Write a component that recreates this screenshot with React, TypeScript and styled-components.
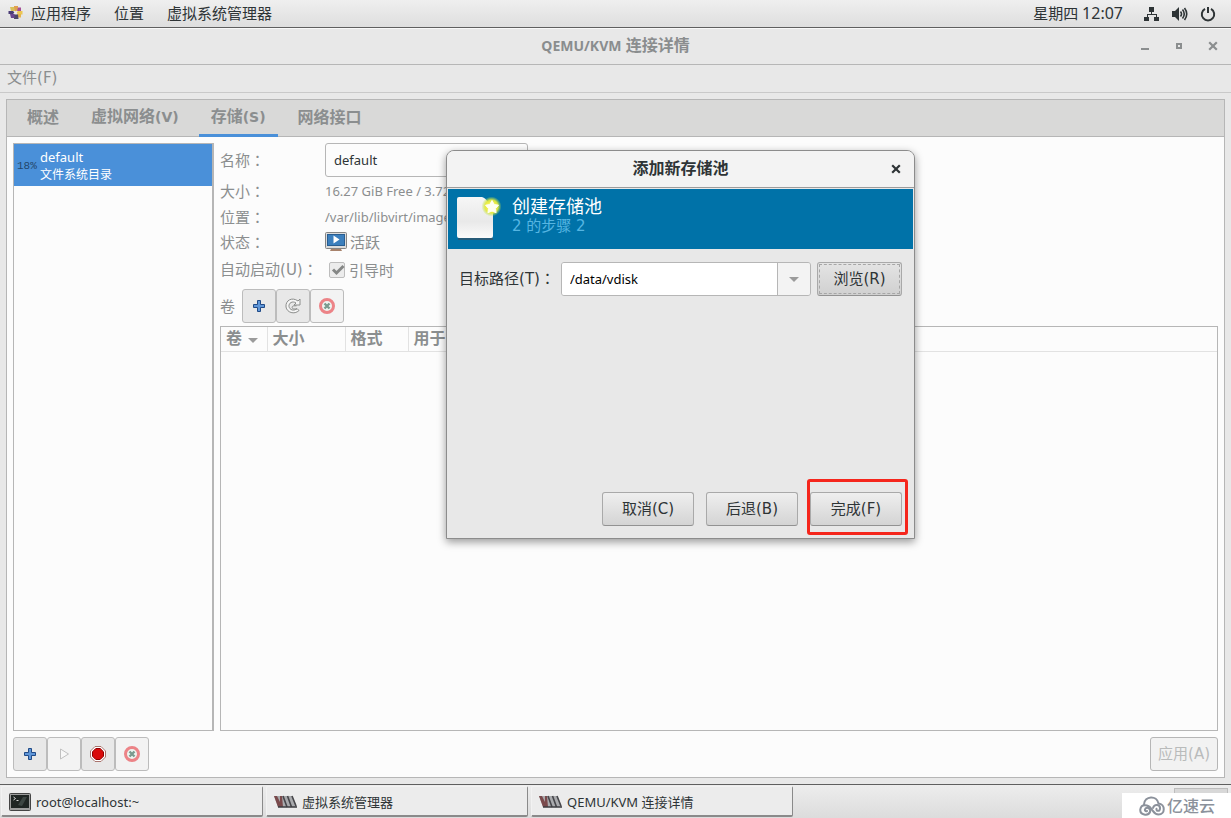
import React from "react";
import styled, { createGlobalStyle, css } from "styled-components";

const sans = `"Noto Sans", "Noto Sans CJK SC", sans-serif`;
const line = "#b6b6b6";
const muted = "#8b8e8f";

const Global = createGlobalStyle`
  *, *::before, *::after { box-sizing: border-box; }
  body { margin: 0; background: #e8e8e8; font-family: ${sans}; color: #2e3436; }
  button, input { font-family: inherit; color: inherit; margin: 0; }
  button { cursor: default; }
`;

const Desktop = styled.div`
  position: relative;
  display: flex;
  flex-direction: column;
  min-height: 100vh;
  overflow: hidden;
  font-size: 15px;
  line-height: 20px;
`;

const MnemonicText = styled.span`
  font-family: "DejaVu Sans", sans-serif;
`;

/* Top panel */

const Panel = styled.header`
  display: flex;
  align-items: center;
  justify-content: space-between;
  height: 28px;
  padding: 0 15px 0 8px;
  background: linear-gradient(#efefef, #dedede);
  border-bottom: 1px solid #5f5f5f;
`;

const PanelMenus = styled.nav`
  display: flex;
  align-items: center;
  gap: 23px;
`;

const PanelStatus = styled.div`
  display: flex;
  align-items: center;
  gap: 12px;
`;

const PanelButton = styled.button`
  display: flex;
  align-items: center;
  gap: 8px;
  padding: 0 0 2px;
  border: 0;
  background: none;
  font-size: 15px;
  line-height: 20px;
`;

const Clock = styled.time`
  margin-right: 9px;
  padding-bottom: 2px;
`;

const ClockDigits = styled.span`
  font-size: 16px;
`;

/* Main window */

const Window = styled.main`
  display: flex;
  flex: 1;
  flex-direction: column;
`;

const TitleBar = styled.div`
  display: grid;
  grid-template-columns: 1fr auto 1fr;
  align-items: center;
  height: 37px;
  padding: 0 12px 1px;
  border-top: 1px solid #f8f8f8;
  border-bottom: 1px solid ${line};
`;

const Title = styled.h1`
  grid-column: 2;
  margin: 0;
  padding-bottom: 1px;
  color: #8a8d8e;
  font-size: 16px;
  line-height: 20px;
`;

const TitleLatin = styled.span`
  font-size: 14px;
`;

const WindowControls = styled.div`
  display: flex;
  justify-content: flex-end;
  gap: 22px;
`;

const IconOnly = styled.button`
  display: flex;
  padding: 0;
  border: 0;
  background: none;
`;

const MenuBar = styled.nav`
  display: flex;
  align-items: center;
  height: 28px;
  padding: 0 7px;
  border-bottom: 1px solid #c9c9c9;
  color: ${muted};
`;

const Notebook = styled.section`
  display: flex;
  flex: 1;
  flex-direction: column;
  margin: 6px 6px 6px;
  border: 1px solid ${line};
  background: #fcfcfc;
`;

const Tabs = styled.div`
  display: flex;
  gap: 8px;
  height: 37px;
  padding: 0 8px;
  background: #d9d9d8;
  border-bottom: 1px solid ${line};
`;

const Tab = styled.button<{ $active?: boolean }>`
  height: 37px;
  padding: 0 12px 4px;
  border: 0;
  background: none;
  color: ${muted};
  font-size: 16px;
  font-weight: 700;
  line-height: 20px;
  ${MnemonicText} { font-size: 14px; }
  ${(p) => p.$active && css`box-shadow: inset 0 -3px #4a90d9;`}
`;

const Page = styled.div`
  display: flex;
  flex: 1;
  flex-direction: column;
  gap: 6px;
  padding: 6px;
`;

const Split = styled.div`
  display: flex;
  flex: 1;
  gap: 6px;
`;

const PoolList = styled.ul`
  flex: 0 0 201px;
  margin: 0;
  padding: 0;
  list-style: none;
  border: 1px solid ${line};
  border-right-width: 2px;
`;

const PoolRow = styled.li`
  display: flex;
  align-items: center;
  gap: 4px;
  height: 42px;
  padding: 1px 3px 0;
  background: #4a90d9;
  color: #fff;
`;

const Usage = styled.span`
  width: 19px;
  color: #24476b;
  font-family: "Liberation Mono", monospace;
  font-size: 11px;
  line-height: 16px;
`;

const PoolName = styled.strong`
  display: block;
  font-size: 13px;
  font-weight: 400;
  line-height: 17px;
`;

const PoolKind = styled.small`
  display: block;
  font-size: 12px;
  line-height: 17px;
`;

const Details = styled.div`
  display: flex;
  flex: 1;
  flex-direction: column;
  min-width: 0;
`;

const Fields = styled.div`
  display: grid;
  grid-template-columns: 105px 1fr;
  grid-template-rows: 34px 28px 24px 26px 30px;
  align-items: center;
  color: ${muted};
`;

const FieldLabel = styled.label`
  padding-bottom: 1px;
  white-space: nowrap;
`;

const CenteredColon = styled.span`
  font-family: "Noto Sans CJK TC", sans-serif;
`;

const Value = styled.span`
  display: flex;
  align-items: center;
  gap: 3px;
  white-space: nowrap;
`;

const LatinValue = styled(Value)`
  font-size: 13px;
`;

const Entry = styled.input`
  width: 203px;
  height: 34px;
  padding: 0 8px;
  border: 1px solid ${line};
  border-radius: 3px;
  background: #fcfcfc;
  color: #2e3436;
  font-size: 13px;
  outline: 0;
`;

const CheckLabel = styled.label`
  display: flex;
  align-items: center;
  gap: 4px;
  padding-left: 4px;
`;

const CheckFrame = styled.span`
  display: grid;
  width: 16px;
  height: 16px;
  > * { grid-area: 1 / 1; }
`;

const Check = styled.input`
  appearance: none;
  width: 16px;
  height: 16px;
  border: 1px solid #bdbdbd;
  border-radius: 2px;
  background: #ececec;
`;

const VolumeBar = styled.div`
  display: flex;
  align-items: center;
  gap: 7px;
  margin: 4px 0 3px;
  color: ${muted};
`;

const ButtonGroup = styled.div`
  display: flex;
`;

const ToolButton = styled.button<{ $off?: boolean }>`
  display: flex;
  align-items: center;
  justify-content: center;
  width: 34px;
  height: 34px;
  padding: 0;
  border: 1px solid #bcbcbc;
  border-radius: 3px;
  background: ${(p) => (p.$off ? "#f3f3f3" : "#e8e8e8")};
`;

const VolumeFrame = styled.div`
  flex: 1;
  border: 1px solid ${line};
`;

const VolumeTable = styled.table`
  width: 100%;
  border-collapse: collapse;
  table-layout: fixed;
`;

const HeadCell = styled.th<{ $width?: number }>`
  width: ${(p) => (p.$width ? `${p.$width}px` : "auto")};
  height: 24px;
  padding: 0 6px 2px 5px;
  border-bottom: 1px solid #e2e2e2;
  color: ${muted};
  font-size: 16px;
  line-height: 20px;
  text-align: left;
  white-space: nowrap;
  & + & { border-left: 1px solid #e2e2e2; }
  svg { margin-left: 6px; vertical-align: 1px; }
`;

const ActionRow = styled.div`
  display: flex;
  justify-content: space-between;
`;

const ApplyButton = styled.button`
  height: 34px;
  padding: 0 7px 2px;
  border: 1px solid ${line};
  border-radius: 3px;
  background: #f2f2f2;
  color: #b9bbbb;
  font-size: 15px;
  line-height: 20px;
`;

/* Dialog */

const Dialog = styled.div`
  position: absolute;
  top: 150px;
  left: 446px;
  display: flex;
  flex-direction: column;
  width: 469px;
  height: 389px;
  border: 1px solid #8c8c8c;
  border-radius: 8px 8px 0 0;
  background: #e8e8e8;
  box-shadow: 0 3px 8px rgba(0, 0, 0, 0.4);
`;

const DialogHeader = styled.div`
  display: grid;
  grid-template-columns: 1fr auto 1fr;
  align-items: center;
  height: 37px;
  padding: 0 12px;
  border-bottom: 1px solid #9c9c9c;
  border-radius: 7px 7px 0 0;
  background: #f3f3f3;
`;

const DialogTitle = styled.h2`
  grid-column: 2;
  margin: 0;
  padding-bottom: 2px;
  font-size: 16px;
  line-height: 20px;
`;

const DialogClose = styled(IconOnly)`
  justify-self: end;
`;

const Banner = styled.div`
  display: flex;
  gap: 9px;
  height: 62px;
  padding: 7px 9px;
  border: 1px solid #e8e8e8;
  background: #0072a8;
`;

const BannerTitle = styled.h3`
  margin: 0;
  color: #fff;
  font-size: 18px;
  font-weight: 400;
  line-height: 20px;
`;

const BannerStep = styled.p`
  margin: 0;
  color: #55b5e2;
  font-family: "DejaVu Sans", "Noto Sans CJK SC", sans-serif;
  font-size: 15px;
  line-height: 20px;
`;

const PathRow = styled.div`
  display: flex;
  flex: 1;
  align-items: flex-start;
  gap: 6px;
  padding: 12px;
`;

const PathLabel = styled.label`
  flex: 0 0 95px;
  line-height: 32px;
  white-space: nowrap;
`;

const Combo = styled.div`
  display: flex;
  flex: 1;
  height: 34px;
  border: 1px solid ${line};
  border-radius: 3px;
  overflow: hidden;
`;

const ComboInput = styled.input`
  flex: 1;
  min-width: 0;
  padding: 0 8px;
  border: 0;
  outline: 0;
  background: #fff;
  color: #000;
  font-size: 13px;
`;

const ComboToggle = styled.button`
  display: flex;
  align-items: center;
  justify-content: center;
  width: 33px;
  padding: 0;
  border: 0;
  border-left: 1px solid ${line};
  background: #f3f3f3;
`;

const DialogButton = styled.button<{ $focused?: boolean }>`
  min-width: ${(p) => (p.$focused ? 85 : 92)}px;
  height: 34px;
  padding: 0 0 2px;
  border: 1px solid #a9a9a9;
  border-bottom-color: #929292;
  border-radius: 3px;
  background: linear-gradient(#efefef, #d4d4d4);
  font-size: 15px;
  line-height: 20px;
  ${(p) => p.$focused && css`
    outline: 1px dashed #a6a6a6;
    outline-offset: -3px;
    background: linear-gradient(#e4e4e4, #d0d0d0);
  `}
`;

const DialogActions = styled.div`
  display: flex;
  justify-content: flex-end;
  gap: 12px;
  padding: 0 12px 12px;
`;

const Marked = styled.div`
  position: relative;
  display: flex;
  &::after {
    content: "";
    position: absolute;
    inset: -13px -6px -9px -3px;
    border: 3px solid #f5261c;
    border-radius: 3px;
    pointer-events: none;
  }
`;

/* Bottom panel */

const TaskBar = styled.footer`
  position: relative;
  display: flex;
  gap: 3px;
  height: 34px;
  padding: 1px 2px 0 1px;
  border-top: 1px solid #5f5f5f;
  background: linear-gradient(#ededed, #dcdcdc);
`;

const Task = styled.button`
  display: flex;
  align-items: center;
  gap: 5px;
  flex: 0 1 262px;
  height: 31px;
  padding: 1px 7px 0;
  border: 1px solid #f2f2f2;
  border-right-color: #8a8a8a;
  border-bottom: 2px solid #8a8a8a;
  border-radius: 2px;
  background: #ececec;
  font-size: 13px;
  line-height: 20px;
  white-space: nowrap;
`;

const Workspace = styled.span`
  width: 54px;
  height: 27px;
  margin: 2px 1px 0 auto;
  border: 1px solid #bdbdbd;
  background: #d8d8d8;
`;

const Watermark = styled.div`
  position: absolute;
  right: 0;
  bottom: 0;
  display: flex;
  align-items: center;
  justify-content: flex-end;
  gap: 2px;
  width: 109px;
  height: 25px;
  padding-right: 16px;
  background: #fff;
  color: #8b919b;
  font-size: 16px;
  font-weight: 500;
`;

/* Icons */

const AppsIcon = () => (
  <svg width="15" height="15" viewBox="0 0 15 15">
    <path d="M6 1h4v4L7.500 6.500 6 5z" fill="#e0a050" />
    <path d="M10 2.500h3V6H9z" fill="#a44f96" />
    <path d="M10 6h4.500v3.500H10L8.500 7.500z" fill="#ecc652" />
    <path d="M9 9h4v3.500h-3z" fill="#e6b54b" />
    <path d="M6 9.500h4l.5 4.500H6z" fill="#4d4668" />
    <path d="M2 9h4.500v4H3z" fill="#6a4691" />
    <path d="M.5 6H5l1.500 1.500L5 9H.5z" fill="#4a3c76" />
    <path d="M2 2h4l1 4H3z" fill="#d9c159" />
    <path d="M6.500 6.500h2v2h-2z" fill="#f6e9f0" />
  </svg>
);

const NetworkIcon = () => (
  <svg width="16" height="16" viewBox="0 0 16 16" fill="#2e3436">
    <path d="M5 1h5v5H8v2h5v3h2v4h-5v-4h2V9H4v2h1v4H0v-4h3V8h4V6H5z" />
  </svg>
);

const VolumeIcon = () => (
  <svg width="16" height="16" viewBox="0 0 16 16" fill="none" stroke="#2e3436" strokeWidth="1.600">
    <path d="M0 5h3l4-4v14l-4-4H0z" fill="#2e3436" stroke="none" />
    <path d="M8.500 5.500q2 2.500 0 5M10.500 3.500q3.500 4.500 0 9M12.500 2q4.500 6 0 12" />
  </svg>
);

const PowerIcon = () => (
  <svg width="16" height="16" viewBox="0 0 16 16" fill="none" stroke="#2e3436" strokeWidth="2">
    <path d="M5 2.800a6.200 6.200 0 1 0 6 0M8 1v6" />
  </svg>
);

const CloseIcon = ({ color }: { color: string }) => (
  <svg width="12" height="12" viewBox="0 0 12 12" stroke={color} strokeWidth="2.200">
    <path d="M2.200 2.200l7.600 7.600M9.800 2.200L2.200 9.800" />
  </svg>
);

const MinimizeIcon = () => (
  <svg width="12" height="12" viewBox="0 0 12 12"><path d="M2 8h8v2H2z" fill={muted} /></svg>
);

const MaximizeIcon = () => (
  <svg width="12" height="12" viewBox="0 0 12 12">
    <path d="M4 4h4v4H4z" fill="none" stroke={muted} strokeWidth="2" />
  </svg>
);

const PlusIcon = () => (
  <svg width="14" height="14" viewBox="0 0 14 14">
    <path d="M5.500 1.500h3v4h4v3h-4v4h-3v-4h-4v-3h4z" fill="#5f96d8" stroke="#204a87" strokeLinejoin="round" />
  </svg>
);

const RefreshIcon = () => (
  <svg width="18" height="18" viewBox="0 0 18 18" fill="#f5f5f5" stroke="#8b8d8b" strokeLinejoin="round">
    <path d="M16 2v6h-6l2-2C8.500 3.500 4.500 6 5 9.500c.6 3.500 5 5 8 2l2 2C10.500 18 2.800 15.500 2 10 1.200 3.500 8-.5 14 4z" />
    <path d="M12.500 8.800H10C7.500 8.800 7.500 12 10 12h3" fill="none" />
  </svg>
);

const DeleteIcon = () => (
  <svg width="18" height="18" viewBox="0 0 18 18">
    <circle cx="9" cy="9" r="6.500" fill="#eef4f0" stroke="#ec8387" strokeWidth="3" />
    <path d="M6.500 6.500l5 5m0-5l-5 5" stroke="#7b9a8f" strokeWidth="2.400" />
  </svg>
);

const PlayIcon = () => (
  <svg width="16" height="16" viewBox="0 0 16 16">
    <path d="M4.500 3v10l8-5z" fill="#f8f8f8" stroke="#c1c1c1" strokeLinejoin="round" />
  </svg>
);

const StopIcon = () => (
  <svg width="16" height="16" viewBox="0 0 16 16">
    <path d="M5 .5h6L15.500 5v6L11 15.500H5L.5 11V5z" fill="#fff" stroke="#a9746e" />
    <path d="M5.800 2.500h4.400l3.300 3.300v4.400l-3.300 3.300H5.800l-3.300-3.300V5.800z" fill="#d90a0a" stroke="#8f0000" />
  </svg>
);

const ArrowIcon = () => (
  <svg width="10" height="5" viewBox="0 0 10 5"><path d="M0 0h10L5 5z" fill="#9b9b9b" /></svg>
);

const RunningIcon = () => (
  <svg width="22" height="20" viewBox="0 0 22 20">
    <path d="M6 17h10l1 2H5z" fill="#a8826b" />
    <rect x=".5" y=".5" width="21" height="16" rx="1" fill="#dcdcdc" stroke="#858585" />
    <rect x="2.500" y="2.500" width="17" height="11" fill="#3c7fbd" stroke="#285e92" />
    <path d="M8.500 3.500v8l6-4z" fill="#fff" />
  </svg>
);

const TickIcon = () => (
  <svg width="16" height="16" viewBox="0 0 16 16" pointerEvents="none">
    <path d="M4 7.500l3.500 3.500L14.500 4" fill="none" stroke="#858786" strokeWidth="3" />
  </svg>
);

const NewPageIcon = () => (
  <svg width="46" height="46" viewBox="0 0 46 46">
    <defs>
      <linearGradient id="paper" x1="0" y1="0" x2="0" y2="1">
        <stop offset="0" stopColor="#f6f6f6" />
        <stop offset=".6" stopColor="#e9e9e9" />
        <stop offset="1" stopColor="#fbfbfb" />
      </linearGradient>
      <radialGradient id="glow">
        <stop offset=".3" stopColor="#fdf65a" />
        <stop offset=".65" stopColor="#e3ea3c" stopOpacity=".95" />
        <stop offset="1" stopColor="#b4dc50" stopOpacity="0" />
      </radialGradient>
    </defs>
    <path d="M1 43h35" stroke="#275b78" strokeWidth="2" />
    <path d="M2 1h23c5 1 7 8 11 12v27q0 2-2 2H2q-2 0-2-2V3q0-2 2-2z" fill="url(#paper)" />
    <circle cx="34.500" cy="10.500" r="10" fill="url(#glow)" />
    <path d="M35 4.500l2.200 4 4.300.7-3 3.300.6 4.300-4.100-1.800-4.100 1.800.6-4.300-3-3.300 4.300-.7z" fill="#fffff0" stroke="#fffff0" strokeLinejoin="round" />
  </svg>
);

const TerminalIcon = () => (
  <svg width="22" height="18" viewBox="0 0 22 18">
    <rect x=".5" y=".5" width="21" height="17" rx="1" fill="#9d9d9d" stroke="#444" />
    <rect x="2" y="2" width="18" height="13" fill="#1f2523" />
    <path d="M9 12l5-8h4l-5 9z" fill="#3d4643" />
    <path d="M4.500 4l2 1.500-2 1.500M7.500 7.500h2" fill="none" stroke="#d6d6d6" />
  </svg>
);

const VirtIcon = () => (
  <svg width="23" height="13" viewBox="0 0 23 13">
    <path d="M0 1h18l5 11H4z" fill="#a9aaad" />
    <path d="M0 1h3l3 6V1h2l1 11H4z" fill="#7a4a4c" />
    <path d="M9 1l4 11M13.500 1l4 11M18 1l4 10" stroke="#46464a" strokeWidth="1.600" />
    <path d="M4 12h19" stroke="#3c3c40" strokeWidth="1.500" />
  </svg>
);

const CloudIcon = () => (
  <svg width="26" height="20" viewBox="0 0 26 20" fill="none" stroke="#8b919b" strokeWidth="2" strokeLinecap="round">
    <path d="M5 8.500C5.500-.5 18-1 19.500 7.500c7 .5 7 11 0 11-4 0-5-3-7-5.500C9 8 2 8 1.300 13.500.8 19 9 20.500 11 16c1-3-2.500-5.500-4.500-3.500-1.500 2 .5 3.500 1.500 2.500" />
    <path d="M14 12c1.500-4.500 7.500-3.500 7 .8-.5 3-4 2.500-3.500 0" />
  </svg>
);

const Colon = () => <CenteredColon>：</CenteredColon>;

/* A caption followed by its keyboard mnemonic in parentheses. */
const Caption = ({ text, hotkey }: { text: string; hotkey?: string }) => (
  <>{text}{hotkey && <MnemonicText>({hotkey})</MnemonicText>}</>
);

const tabs = [
  { text: "概述" },
  { text: "虚拟网络", hotkey: "V" },
  { text: "存储", hotkey: "S", active: true },
  { text: "网络接口" },
];
const columns = [
  { name: "卷", width: 46, sorted: true },
  { name: "大小", width: 78 },
  { name: "格式", width: 63 },
  { name: "用于" },
];

export default function App() {
  return (
    <Desktop>
      <Global />
      <Panel>
        <PanelMenus>
          <PanelButton><AppsIcon />应用程序</PanelButton>
          <PanelButton>位置</PanelButton>
          <PanelButton>虚拟系统管理器</PanelButton>
        </PanelMenus>
        <PanelStatus>
          <Clock>星期四 <ClockDigits>12:07</ClockDigits></Clock>
          <NetworkIcon />
          <VolumeIcon />
          <PowerIcon />
        </PanelStatus>
      </Panel>

      <Window>
        <TitleBar>
          <Title><TitleLatin>QEMU/KVM</TitleLatin> 连接详情</Title>
          <WindowControls>
            <IconOnly aria-label="最小化"><MinimizeIcon /></IconOnly>
            <IconOnly aria-label="最大化"><MaximizeIcon /></IconOnly>
            <IconOnly aria-label="关闭"><CloseIcon color={muted} /></IconOnly>
          </WindowControls>
        </TitleBar>
        <MenuBar>
          <PanelButton><span><Caption text="文件" hotkey="F" /></span></PanelButton>
        </MenuBar>

        <Notebook>
          <Tabs role="tablist">
            {tabs.map((t) => (
              <Tab key={t.text} role="tab" aria-selected={!!t.active} $active={t.active}>
                <Caption text={t.text} hotkey={t.hotkey} />
              </Tab>
            ))}
          </Tabs>
          <Page>
            <Split>
              <PoolList>
                <PoolRow>
                  <Usage>18%</Usage>
                  <div>
                    <PoolName>default</PoolName>
                    <PoolKind>文件系统目录</PoolKind>
                  </div>
                </PoolRow>
              </PoolList>
              <Details>
                <Fields>
                  <FieldLabel htmlFor="pool-name">名称<Colon /></FieldLabel>
                  <Entry id="pool-name" defaultValue="default" />
                  <span>大小<Colon /></span>
                  <LatinValue>16.27 GiB Free / 3.72 GiB In Use</LatinValue>
                  <span>位置<Colon /></span>
                  <LatinValue>/var/lib/libvirt/images</LatinValue>
                  <span>状态<Colon /></span>
                  <Value><RunningIcon />活跃</Value>
                  <FieldLabel htmlFor="autostart"><Caption text="自动启动" hotkey="U" /><Colon /></FieldLabel>
                  <CheckLabel>
                    <CheckFrame>
                      <Check id="autostart" type="checkbox" defaultChecked />
                      <TickIcon />
                    </CheckFrame>
                    引导时
                  </CheckLabel>
                </Fields>
                <VolumeBar>
                  <span>卷</span>
                  <ButtonGroup>
                    <ToolButton aria-label="新建卷"><PlusIcon /></ToolButton>
                    <ToolButton aria-label="刷新"><RefreshIcon /></ToolButton>
                    <ToolButton aria-label="删除卷" $off><DeleteIcon /></ToolButton>
                  </ButtonGroup>
                </VolumeBar>
                <VolumeFrame>
                  <VolumeTable>
                    <thead>
                      <tr>
                        {columns.map((c) => (
                          <HeadCell key={c.name} $width={c.width}>
                            {c.name}{c.sorted && <ArrowIcon />}
                          </HeadCell>
                        ))}
                      </tr>
                    </thead>
                  </VolumeTable>
                </VolumeFrame>
              </Details>
            </Split>
            <ActionRow>
              <ButtonGroup>
                <ToolButton aria-label="添加池"><PlusIcon /></ToolButton>
                <ToolButton aria-label="启动池" $off><PlayIcon /></ToolButton>
                <ToolButton aria-label="停止池"><StopIcon /></ToolButton>
                <ToolButton aria-label="删除池" $off><DeleteIcon /></ToolButton>
              </ButtonGroup>
              <ApplyButton disabled><Caption text="应用" hotkey="A" /></ApplyButton>
            </ActionRow>
          </Page>
        </Notebook>
      </Window>

      <TaskBar>
        <Task><TerminalIcon />root@localhost:~</Task>
        <Task><VirtIcon />虚拟系统管理器</Task>
        <Task><VirtIcon />QEMU/KVM 连接详情</Task>
        <Workspace />
        <Watermark><CloudIcon />亿速云</Watermark>
      </TaskBar>

      <Dialog role="dialog" aria-labelledby="dialog-title">
        <DialogHeader>
          <DialogTitle id="dialog-title">添加新存储池</DialogTitle>
          <DialogClose aria-label="关闭"><CloseIcon color="#2e3436" /></DialogClose>
        </DialogHeader>
        <Banner>
          <NewPageIcon />
          <div>
            <BannerTitle>创建存储池</BannerTitle>
            <BannerStep>2 的步骤 2</BannerStep>
          </div>
        </Banner>
        <PathRow>
          <PathLabel htmlFor="target"><Caption text="目标路径" hotkey="T" /><Colon /></PathLabel>
          <Combo>
            <ComboInput id="target" defaultValue="/data/vdisk" />
            <ComboToggle aria-label="选择路径"><ArrowIcon /></ComboToggle>
          </Combo>
          <DialogButton $focused><Caption text="浏览" hotkey="R" /></DialogButton>
        </PathRow>
        <DialogActions>
          <DialogButton><Caption text="取消" hotkey="C" /></DialogButton>
          <DialogButton><Caption text="后退" hotkey="B" /></DialogButton>
          <Marked><DialogButton><Caption text="完成" hotkey="F" /></DialogButton></Marked>
        </DialogActions>
      </Dialog>
    </Desktop>
  );
}
